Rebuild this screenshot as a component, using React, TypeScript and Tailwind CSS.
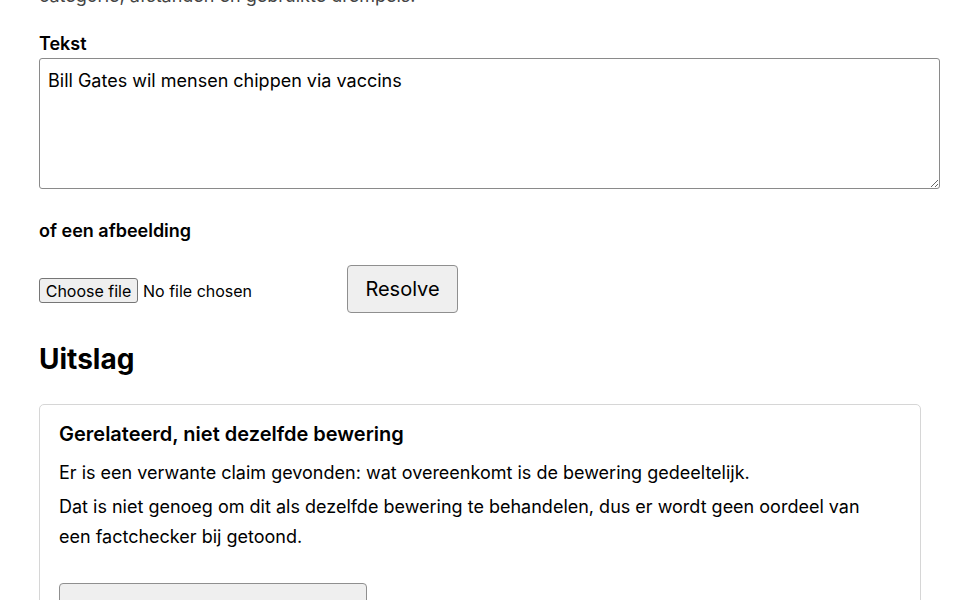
export default function App() {
  return (
    <div className="min-h-screen bg-white font-['Inter','Liberation_Sans',Arial,sans-serif] text-black">
      <div className="px-[39px] pb-10">
        <p className="mt-[-15px] text-[18px] leading-[22px] text-[#444]">
          categorie, afstanden en gebruikte drempels.
        </p>

        <label htmlFor="tekst" className="mt-[26px] block text-[18px] font-semibold leading-[22px]">
          Tekst
        </label>
        <textarea
          id="tekst"
          defaultValue="Bill Gates wil mensen chippen via vaccins"
          className="mt-[3px] block h-[131px] w-[901px] rounded-[3px] border border-[#8a8a8a] px-2 pt-[11px] text-[18px] leading-[22px] text-black outline-none"
        />

        <p className="mt-[31px] text-[18px] font-semibold leading-[22px]">of een afbeelding</p>

        <div className="mt-[23px] flex items-center">
          <div className="flex w-[308px] items-center gap-[5px] pt-[3px]">
            <button className="h-[25px] w-[99px] rounded-[3px] border border-[#767676] bg-[#efefef] text-[16px] leading-none text-black">
              Choose file
            </button>
            <span className="text-[16px]">No file chosen</span>
          </div>
          <button className="h-[48px] w-[111px] rounded-[4px] border border-[#8f8f8f] bg-[#efefef] text-[20px] text-black">
            Resolve
          </button>
        </div>

        <h2 className="mt-[29px] text-[28px] font-bold leading-[34px]">Uitslag</h2>

        <div className="mt-[28px] w-[882px] rounded-[5px] border border-[#d6d6d6] px-[19px] pt-[17px] pb-5">
          <h3 className="text-[20px] font-semibold leading-[24px]">Gerelateerd, niet dezelfde bewering</h3>
          <p className="mt-[12px] text-[18px] leading-[30px]">
            Er is een verwante claim gevonden: wat overeenkomt is de bewering gedeeltelijk.
          </p>
          <p className="mt-[4px] max-w-[830px] text-[18px] leading-[30px]">
            Dat is niet genoeg om dit als dezelfde bewering te behandelen, dus er wordt geen oordeel van een
            factchecker bij getoond.
          </p>
          <button className="mt-[31px] h-[54px] w-[308px] rounded-[4px] border border-[#8f8f8f] bg-[#efefef] text-[18px] text-black">
            Toon gerelateerde claim
          </button>
        </div>
      </div>
    </div>
  );
}
